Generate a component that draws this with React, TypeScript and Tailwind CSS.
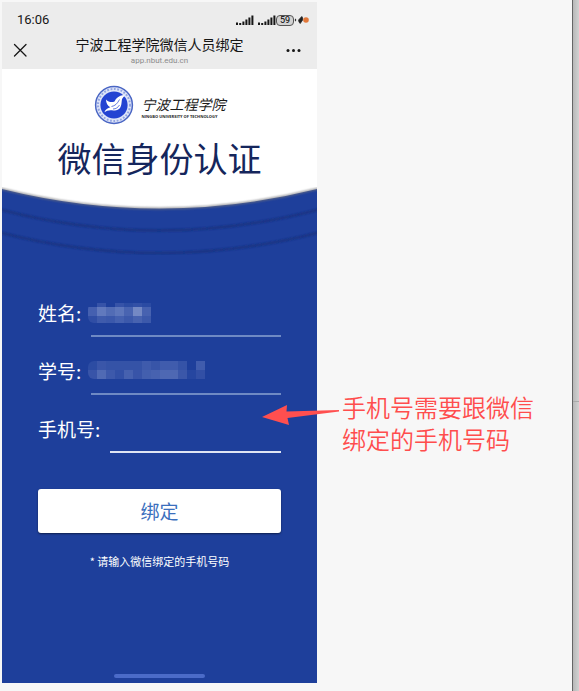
import type { ReactNode } from 'react'

interface Cell {
  x: number
  y: number
  w: number
  h: number
  fill: string
}

const NAME_CELLS: Cell[] = [
  { x: 9, y: 0, w: 9, h: 4, fill: '#3653a8' },
  { x: 27, y: 0, w: 9, h: 4, fill: '#3653a8' },
  { x: 36, y: 0, w: 9, h: 4, fill: '#2c4ca3' },
  { x: 45, y: 0, w: 9, h: 4, fill: '#3250a6' },
  { x: 54, y: 0, w: 9, h: 4, fill: '#2b4ba3' },
  { x: 0, y: 4, w: 9, h: 9, fill: '#4560b0' },
  { x: 9, y: 4, w: 9, h: 9, fill: '#6179bd' },
  { x: 18, y: 4, w: 9, h: 9, fill: '#526cb5' },
  { x: 27, y: 4, w: 9, h: 9, fill: '#5d76bb' },
  { x: 36, y: 4, w: 9, h: 9, fill: '#4964b1' },
  { x: 45, y: 4, w: 9, h: 9, fill: '#7489c4' },
  { x: 54, y: 4, w: 9, h: 9, fill: '#4762b0' },
  { x: 0, y: 13, w: 9, h: 7, fill: '#304ea5' },
  { x: 9, y: 13, w: 9, h: 7, fill: '#3f5bac' },
  { x: 18, y: 13, w: 9, h: 7, fill: '#3b58ab' },
  { x: 27, y: 13, w: 9, h: 7, fill: '#4561b0' },
  { x: 36, y: 13, w: 9, h: 7, fill: '#3c59ab' },
  { x: 45, y: 13, w: 9, h: 7, fill: '#4863b0' },
  { x: 54, y: 13, w: 9, h: 7, fill: '#3c59ab' },
]

const ID_CELLS: Cell[] = [
  { x: 0, y: 0, w: 9, h: 9, fill: '#2c4ca3' },
  { x: 9, y: 0, w: 9, h: 9, fill: '#3a56a9' },
  { x: 18, y: 0, w: 36, h: 9, fill: '#3553a7' },
  { x: 54, y: 0, w: 9, h: 9, fill: '#3f5bac' },
  { x: 63, y: 0, w: 9, h: 9, fill: '#3855a8' },
  { x: 72, y: 0, w: 18, h: 9, fill: '#405cad' },
  { x: 90, y: 0, w: 9, h: 9, fill: '#3553a7' },
  { x: 108, y: 0, w: 9, h: 9, fill: '#405cad' },
  { x: 0, y: 9, w: 9, h: 9, fill: '#3854a8' },
  { x: 9, y: 9, w: 9, h: 9, fill: '#506ab4' },
  { x: 18, y: 9, w: 9, h: 9, fill: '#3d59ab' },
  { x: 27, y: 9, w: 9, h: 9, fill: '#3250a6' },
  { x: 36, y: 9, w: 9, h: 9, fill: '#4661af' },
  { x: 45, y: 9, w: 9, h: 9, fill: '#3854a8' },
  { x: 54, y: 9, w: 9, h: 9, fill: '#435fae' },
  { x: 63, y: 9, w: 9, h: 9, fill: '#4762b0' },
  { x: 72, y: 9, w: 18, h: 9, fill: '#4e68b3' },
  { x: 90, y: 9, w: 9, h: 9, fill: '#3b57a9' },
  { x: 99, y: 9, w: 9, h: 9, fill: '#2646a0' },
  { x: 108, y: 9, w: 9, h: 9, fill: '#324fa5' },
]

function Mosaic({ cells, width, height }: { cells: Cell[]; width: number; height: number }) {
  return (
    <svg
      width={width}
      height={height}
      shapeRendering="crispEdges"
      className="pointer-events-none absolute left-[50px] top-1 rounded-l-md"
      aria-hidden="true"
    >
      {cells.map((c) => (
        <rect key={`${c.x}-${c.y}`} x={c.x} y={c.y} width={c.w} height={c.h} fill={c.fill} />
      ))}
    </svg>
  )
}

function Signal() {
  return (
    <svg width="18" height="11" viewBox="0 0 18 11" fill="#161616" aria-hidden="true">
      <rect x="0" y="7.5" width="2" height="2.5" />
      <rect x="3.2" y="8" width="2" height="2" />
      <rect x="6.4" y="6.5" width="2" height="3.5" />
      <rect x="9.4" y="4.5" width="2" height="5.5" />
      <rect x="12.4" y="2.5" width="2" height="7.5" />
      <rect x="15.4" y="0.5" width="2" height="9.5" />
    </svg>
  )
}

function StatusIcons() {
  return (
    <div className="flex items-center">
      <Signal />
      <span className="ml-1 flex">
        <Signal />
      </span>
      <span className="flex h-[11px] w-[18px] items-center justify-center rounded border border-[#555] bg-[#d2d2d2] font-['Roboto',sans-serif] text-[9px] leading-none text-black">
        59
      </span>
      <svg width="15" height="12" viewBox="0 0 15 12" aria-hidden="true">
        <path d="M1.500 4.800v2.400" stroke="#333" strokeWidth="1.200" />
        <path d="M7.800 2.500 4.600 6 5 8 6.200 9.500 8.600 6V4z" fill="#222" stroke="#222" strokeWidth="0.800" />
        <circle cx="12" cy="6" r="2.800" fill="#e2783a" />
      </svg>
    </div>
  )
}

function Emblem() {
  return (
    <svg width="40" height="40" viewBox="0 0 40 40" fill="none" aria-hidden="true">
      <circle cx="20" cy="20" r="18.400" fill="#dfe5f8" stroke="#4a66c4" strokeWidth="1.500" />
      <circle cx="20" cy="20" r="16" stroke="#93a5e2" strokeWidth="2" strokeDasharray="1.800 1.600" />
      <circle cx="20" cy="20" r="13.600" fill="#2443d2" />
      <path
        d="M12 14.500c2.500 2.500 5.500 3.300 8.500 2 1.500-3.500 4.500-6 9-6.500l1.500 1c-2 1-3 2.500-3.200 4.500-.3 2.500-.3 6.500-2.800 8.500-2.500 1.800-6 1.500-8.500 1.300-2.500 0-4.500.9-6 2 .5-2 2-3.300 4-4.200l1.800-.8c-2.600-1.500-4.300-4.300-4.300-7.800z"
        fill="#fff"
      />
      <path d="M17.500 21.500c3.500-.5 6-3 8-7M19 24c3 0 5-1.500 6.500-4" stroke="#2443d2" strokeWidth="0.700" />
    </svg>
  )
}

function Curves() {
  return (
    <svg viewBox="0 0 315 68" preserveAspectRatio="none" className="block h-[68px] w-full" aria-hidden="true">
      <defs>
        <filter id="soft" x="-5%" y="-30%" width="110%" height="160%">
          <feGaussianBlur stdDeviation="0.8" />
        </filter>
      </defs>
      <g fill="none" stroke="#152c72" strokeWidth="1.500" filter="url(#soft)">
        <path d="M-4 22Q157.500 65 319 22" />
        <path d="M-4 45Q157.500 87 319 45" />
      </g>
      <path d="M-4 -4V1Q157.500 42 319 1V-4z" fill="#fff" />
      <path d="M-4 1Q157.500 42 319 1" stroke="#74757a" strokeWidth="1.500" fill="none" filter="url(#soft)" />
    </svg>
  )
}

interface FieldProps {
  id: string
  label: string
  line: string
  children?: ReactNode
}

function Field({ id, label, line, children }: FieldProps) {
  return (
    <div className="relative flex h-[38px] items-start">
      <label htmlFor={id} className="shrink-0 text-[19px] leading-7 text-white">
        {label}
      </label>
      <input
        id={id}
        type="text"
        className={`ml-[10px] h-full min-w-0 flex-1 border-b-2 bg-transparent pb-2 text-base text-white outline-none ${line}`}
      />
      {children}
    </div>
  )
}

function Phone() {
  return (
    <main className="mb-2 mt-0.5 flex flex-col bg-[#1e3f9b]">
      <header className="h-[67px] bg-[#ececec] text-[#161616]">
        <div className="flex h-9 items-center justify-between pl-[15px] pr-2">
          <time className="font-['Roboto',sans-serif] text-[13px]">16:06</time>
          <StatusIcons />
        </div>
        <div className="flex items-start justify-between pl-[10px] pr-4">
          <button type="button" aria-label="关闭" className="mt-1">
            <svg
              width="17"
              height="17"
              viewBox="0 0 17 17"
              stroke="#161616"
              strokeWidth="1.300"
              strokeLinecap="round"
              aria-hidden="true"
            >
              <path d="M2.500 2.500l11.500 11.500M14 2.500L2.500 14" />
            </svg>
          </button>
          <div className="-mt-0.5 pl-1 text-center">
            <h1 className="text-sm leading-4">宁波工程学院微信人员绑定</h1>
            <p className="pt-1 font-['Roboto',sans-serif] text-[8px] leading-[10px] text-[#8b8b8b]">app.nbut.edu.cn</p>
          </div>
          <button type="button" aria-label="更多" className="mt-2.5">
            <svg width="15" height="5" viewBox="0 0 15 5" fill="#161616" aria-hidden="true">
              <circle cx="2" cy="2.500" r="1.500" />
              <circle cx="7.500" cy="2.500" r="1.500" />
              <circle cx="13" cy="2.500" r="1.500" />
            </svg>
          </button>
        </div>
      </header>

      <section className="flex h-[118px] flex-col items-center bg-white pt-4">
        <div className="flex items-center gap-2">
          <Emblem />
          <div className="pt-1 text-[#1c1c1c]">
            <p className="text-sm italic leading-5">宁波工程学院</p>
            <p className="whitespace-nowrap font-['Open_Sans',sans-serif] text-[4px] font-bold leading-[6px]">
              NINGBO UNIVERSITY OF TECHNOLOGY
            </p>
          </div>
        </div>
        <h2 className="text-[34px] font-normal leading-[66px] text-[#15265c]">微信身份认证</h2>
      </section>
      <Curves />

      <form className="flex flex-1 flex-col px-9" onSubmit={(e) => e.preventDefault()}>
        <div className="mt-11 flex flex-col gap-5">
          <Field id="name" label="姓名:" line="border-[#6f8ac4]">
            <Mosaic cells={NAME_CELLS} width={63} height={20} />
          </Field>
          <Field id="student-id" label="学号:" line="border-[#6f8ac4]">
            <Mosaic cells={ID_CELLS} width={117} height={18} />
          </Field>
          <Field id="phone" label="手机号:" line="border-[#dfe5f4]" />
        </div>
        <button
          type="submit"
          className="mt-9 h-11 rounded-[3px] bg-white text-[19px] text-[#3b6fbd] shadow-[0_1px_2px_rgba(0,0,0,0.5)]"
        >
          绑定
        </button>
        <p className="mt-5 text-center text-[11px] leading-4 text-white">* 请输入微信绑定的手机号码</p>
        <div className="mx-auto mb-[5px] mt-auto h-1 w-[91px] rounded-full bg-[#4b6bc8]" />
      </form>
    </main>
  )
}

export default function App() {
  return (
    <div className="grid min-h-screen grid-cols-[minmax(0,21fr)_minmax(0,17fr)_7px] bg-[#f7f7f7] pl-0.5 font-['Noto_Sans_CJK_SC',sans-serif]">
      <Phone />
      <aside className="relative pl-[25px] pr-8 pt-[391px]">
        <svg
          width="78"
          height="22"
          viewBox="0 0 78 22"
          className="absolute -left-[55px] top-[404px]"
          aria-hidden="true"
        >
          <path d="M0 13 25 1 24.500 7.500 77 6V7.500L25.500 14 27 21z" fill="#ff4f4f" />
        </svg>
        <p className="text-2xl font-[350] leading-8 text-[#ff4d4d]">手机号需要跟微信绑定的手机号码</p>
      </aside>
      <div className="border-l border-[#666] bg-gradient-to-r from-[#b8b8b8] to-[#d2d2d2] pt-[401px]">
        <div className="h-px bg-[#aaa]" />
      </div>
    </div>
  )
}
